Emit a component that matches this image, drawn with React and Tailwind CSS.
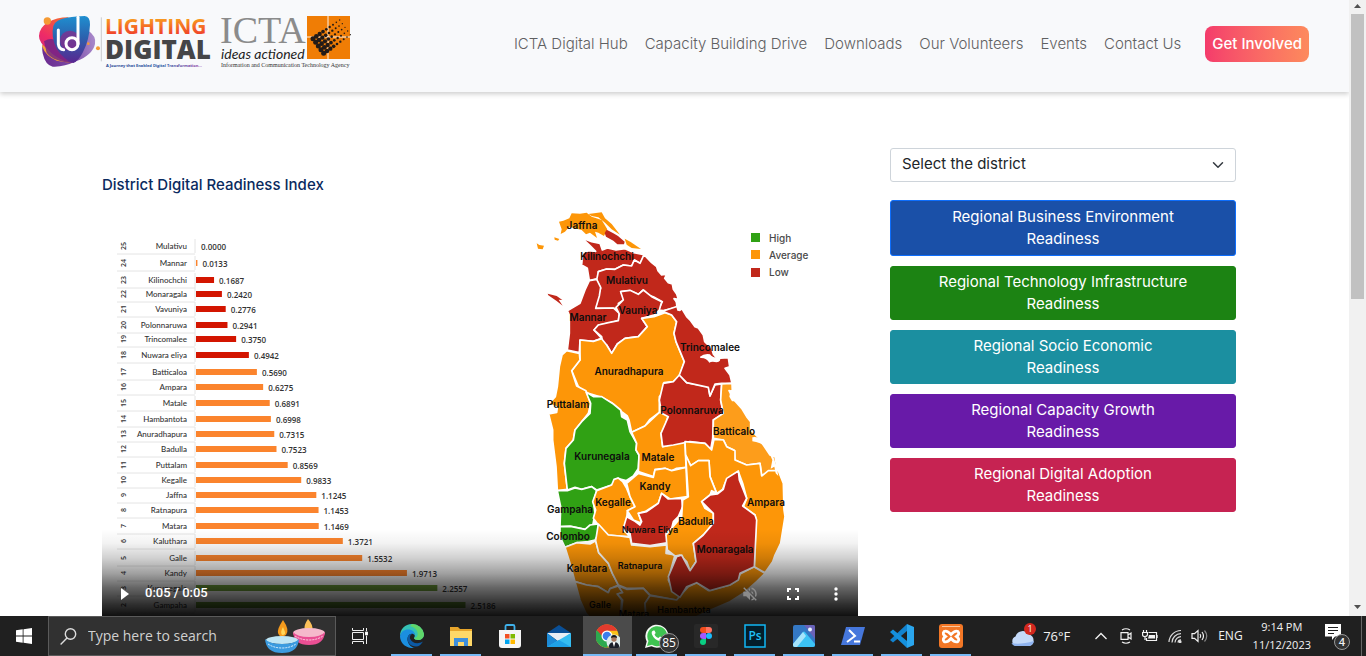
import React from "react";

const NAV = ["ICTA Digital Hub", "Capacity Building Drive", "Downloads", "Our Volunteers", "Events", "Contact Us"];

const INDEX = [
  [25, "Mulativu", "0.0000", 246],
  [24, "Mannar", "0.0133", 263],
  [23, "Kilinochchi", "0.1687", 280],
  [22, "Monaragala", "0.2420", 294],
  [21, "Vavuniya", "0.2776", 309],
  [20, "Polonnaruwa", "0.2941", 325],
  [19, "Trincomalee", "0.3750", 339],
  [18, "Nuwara eliya", "0.4942", 355],
  [17, "Batticaloa", "0.5690", 372],
  [16, "Ampara", "0.6275", 387],
  [15, "Matale", "0.6891", 403],
  [14, "Hambantota", "0.6998", 419],
  [13, "Anuradhapura", "0.7315", 434],
  [12, "Badulla", "0.7523", 449],
  [11, "Puttalam", "0.8569", 465],
  [10, "Kegalle", "0.9833", 480],
  [9, "Jaffna", "1.1245", 495],
  [8, "Ratnapura", "1.1453", 510],
  [7, "Matara", "1.1469", 526],
  [6, "Kaluthara", "1.3721", 541],
  [5, "Galle", "1.5532", 558],
  [4, "Kandy", "1.9713", 573],
  [3, "Kurunegala", "2.2557", 588],
  [2, "Gampaha", "2.5186", 605],
];

const RED = "#c1281b";
const ORANGE = "#fd9608";
const GREEN = "#30a114";

const REGIONS = [
  [ORANGE, "100,62 118,55 125,40 150,41 170,38 185,50 215,60 232,88 222,108 205,98 195,95 201,114 180,98 168,103 155,90 135,85 118,80 105,95 92,102 95,88 87,65"],
  [ORANGE, "175,42 215,37 225,55 245,72 270,104 245,88 225,68 205,52 185,48"],
  [ORANGE, "284,116 302,126 333,147 305,144 290,134"],
  [ORANGE, "20,130 28,135 42,137 38,148 24,146"],
  [ORANGE, "73,112 88,117 84,122 74,119"],
  [RED, "230,89 250,100 264,108 284,125 282,133 262,133 250,122 228,110 224,99"],
  [RED, "156,114 185,125 210,130 217,150 232,144 258,150 285,146 312,158 342,164 338,176 330,190 313,180 305,198 280,195 255,208 230,207 205,215 205,235 178,242 172,205 155,195 158,160 175,152 197,154 180,137"],
  [RED, "205,215 230,207 255,208 280,195 305,198 313,180 330,190 342,164 365,188 380,200 384,212 395,225 411,222 404,235 415,248 427,252 430,268 440,282 445,298 432,296 449,318 440,322 400,332 385,330 397,305 370,290 355,285 340,270 325,283 300,272 272,275 285,297 265,310 268,325 197,325 203,290 212,265 200,240"],
  [RED, "178,242 200,238 212,262 208,288 197,325 250,324 268,340 265,362 235,370 205,375 192,390 215,415 190,424 150,420 148,458 112,450 118,400 118,345 112,332 150,310 165,270"],
  [RED, "53,281 80,288 97,300 86,299 98,317 80,303 55,286"],
  [RED, "272,275 300,271 325,283 340,270 365,290 395,305 388,330 372,345 335,355 352,380 325,410 285,415 262,432 245,460 230,435 218,430 215,410 192,390 205,375 235,368 265,362 268,342 258,322 280,300"],
  [ORANGE, "150,420 190,424 215,416 230,435 245,460 262,432 285,415 325,410 352,380 335,355 372,350 405,338 425,345 440,365 432,400 438,425 463,485 448,530 430,545 402,548 400,575 388,590 388,637 360,658 345,678 305,697 297,660 292,648 275,635 245,608 215,592 168,578 145,560 125,512 150,480"],
  [ORANGE, "110,452 148,460 150,480 125,512 140,558 168,572 182,610 175,640 155,665 135,690 130,720 108,745 103,790 112,868 82,872 78,800 68,720 68,690 56,642 80,637 82,622 56,612 76,590 82,560 88,500 96,465"],
  [ORANGE, "55,553 60,550 59,562"],
  [ORANGE, "42,585 50,586 48,588"],
  [GREEN, "168,576 190,590 215,590 250,612 272,630 275,650 292,660 300,695 320,730 318,750 327,765 325,805 310,828 288,842 262,835 245,855 200,870 185,860 155,868 135,862 112,870 103,790 108,745 130,720 135,690 155,665 180,640 182,610"],
  [GREEN, "82,872 112,872 135,864 155,868 185,860 200,872 190,905 195,940 188,978 165,988 120,978 90,980 92,920"],
  [GREEN, "90,980 125,980 165,988 180,975 205,972 206,1000 195,1020 175,1025 140,1028 105,1042 90,1010"],
  [ORANGE, "200,872 245,855 252,838 265,834 278,845 290,865 300,890 315,920 292,932 290,960 280,990 300,1010 270,1008 235,1005 205,975 190,955 197,930 188,905"],
  [ORANGE, "105,1042 140,1028 180,1032 197,1022 206,1058 235,1090 247,1120 265,1155 240,1166 235,1178 205,1160 170,1155 135,1145 120,1090"],
  [ORANGE, "205,972 235,1005 270,1008 300,1012 305,1035 360,1040 410,1035 408,1060 435,1065 425,1100 415,1140 430,1175 450,1190 440,1200 360,1185 340,1165 290,1165 265,1155 247,1120 235,1090 206,1058 197,1022"],
  [ORANGE, "135,1145 170,1155 205,1160 235,1178 240,1166 265,1158 278,1178 262,1182 275,1200 270,1275 200,1275 168,1240 150,1200"],
  [ORANGE, "265,1158 290,1168 340,1165 360,1187 345,1210 350,1275 270,1275 278,1200 262,1182 278,1178"],
  [ORANGE, "360,1187 440,1200 450,1188 475,1160 500,1148 535,1172 600,1155 625,1138 630,1122 672,1100 705,1120 680,1145 640,1180 600,1205 530,1235 450,1275 350,1275 345,1210"],
  [ORANGE, "305,697 345,678 388,637 415,645 405,680 393,700 398,740 430,732 465,725 468,802 440,805 425,812 405,805 375,808 370,830 325,815 327,765 318,750 320,730"],
  [ORANGE, "325,820 370,832 375,810 405,805 425,812 468,802 472,890 420,897 395,880 385,910 345,935 325,940 335,970 310,960 292,932 315,920 300,890 290,850"],
  [RED, "395,880 415,897 455,895 458,920 445,950 430,965 425,985 408,1000 415,1028 360,1037 305,1030 300,1000 280,985 290,950 312,962 330,975 335,965 325,940 350,935 385,910"],
  [RED, "448,525 470,548 535,560 540,588 555,555 575,552 572,600 580,640 550,660 548,715 542,748 525,730 480,725 430,735 398,740 393,700 415,650 395,640 388,600 400,550 430,545"],
  [RED, "398,334 445,318 455,325 470,350 482,362 495,380 505,384 520,405 524,425 545,445 550,462 560,475 595,473 599,500 585,505 600,525 606,550 575,550 555,552 540,588 535,562 470,548 448,525 463,485 438,425 432,400 440,365 425,345"],
  ["#fd9d1b", "575,552 606,550 607,574 597,572 612,600 635,625 650,650 662,665 662,690 688,715 700,735 720,765 735,770 745,825 725,820 695,825 690,790 650,795 615,780 612,750 590,740 580,720 550,715 550,660 580,640 572,600"],
  [ORANGE, "465,725 525,730 545,750 552,718 580,720 590,740 615,752 615,780 650,795 690,790 695,828 715,812 745,812 760,850 762,930 765,950 752,1030 735,1065 728,1085 705,1118 673,1100 678,960 675,945 640,920 650,895 638,850 625,815 600,830 585,850 578,868 560,880 540,830 537,782 505,782 482,797 467,765"],
  [ORANGE, "467,765 482,797 505,782 537,782 540,830 560,880 545,872 540,885 515,905 525,925 550,940 550,970 520,1005 490,1030 498,1085 480,1112 470,1085 450,1065 435,1068 412,1050 408,1005 425,985 455,950 458,900 475,890"],
  [RED, "590,835 625,813 628,840 640,870 650,895 638,918 675,945 680,960 673,1100 630,1120 625,1140 600,1155 540,1172 500,1148 470,1160 450,1192 425,1175 415,1130 440,1070 455,1065 480,1112 498,1085 490,1030 520,1005 550,970 550,940 515,905 540,885 562,882 580,868 585,850"],
];

const LABELS = [
  ["Jaffna", 581, 228], ["Kilinochchi", 606, 259], ["Mulativu", 626, 283], ["Vauniya", 637, 313],
  ["Mannar", 587, 320], ["Trincomalee", 709, 350], ["Anuradhapura", 628, 374], ["Puttalam", 567, 407],
  ["Polonnaruwa", 691, 413], ["Batticalo", 733, 434], ["Kurunegala", 601, 459], ["Matale", 657, 460],
  ["Kandy", 654, 489], ["Kegalle", 612, 505], ["Gampaha", 569, 512], ["Ampara", 765, 505],
  ["Nuwara Eliya", 649, 532, 9], ["Badulla", 695, 524], ["Colombo", 567, 539], ["Monaragala", 724, 552],
  ["Ratnapura", 639, 568, 9], ["Kalutara", 586, 571], ["Galle", 599, 607, 9], ["Matara", 633, 616, 9],
  ["Hambantota", 683, 612, 9],
];

const BUTTONS = [
  ["Regional Business Environment", "border-[#0d6efd] bg-[#1a50a8] py-[5px]"],
  ["Regional Technology Infrastructure", "border-[#1c8313] bg-[#1c8313] py-1"],
  ["Regional Socio Economic", "border-[#1b8fa0] bg-[#1b8fa0] py-1"],
  ["Regional Capacity Growth", "border-[#681aa8] bg-[#681aa8] py-1"],
  ["Regional Digital Adoption", "border-[#c62352] bg-[#c62352] py-1"],
];

function LightingLogo() {
  return (
    <svg viewBox="38 14 174 56" className="h-14 w-[174px] overflow-visible" role="img" aria-label="Lighting Digital">
      <defs>
        <linearGradient id="word" x1="0" y1="0" x2="0" y2="1">
          <stop offset="0.2" stopColor="#f9a11f" /><stop offset="0.8" stopColor="#f0412a" />
        </linearGradient>
        <linearGradient id="shield" x1="0.5" y1="0" x2="0.5" y2="1">
          <stop offset="0" stopColor="#1f8fd0" /><stop offset="0.45" stopColor="#2b62ae" /><stop offset="1" stopColor="#5a2690" />
        </linearGradient>
        <linearGradient id="petal" x1="0.6" y1="0" x2="0.2" y2="1">
          <stop offset="0" stopColor="#f4603a" /><stop offset="0.5" stopColor="#ee2a68" /><stop offset="1" stopColor="#c22a7e" />
        </linearGradient>
        <linearGradient id="tail" x1="0" y1="0" x2="1" y2="0">
          <stop offset="0" stopColor="#1f3f8f" /><stop offset="0.6" stopColor="#2a55a0" /><stop offset="1" stopColor="#8a3aa0" />
        </linearGradient>
        <linearGradient id="under" x1="0" y1="0.4" x2="1" y2="0.3">
          <stop offset="0" stopColor="#6c2c91" /><stop offset="0.5" stopColor="#7a4aa6" /><stop offset="1" stopColor="#a98acb" />
        </linearGradient>
      </defs>
      <g transform="scale(0.33333)">
        <path d="M262 90 Q290 108 285 132 Q278 165 228 184 Q190 202 158 200 Q136 196 128 160 Q124 138 132 124 Z" fill="url(#under)" />
        <path d="M136 120 Q150 165 215 190 L170 182 Q136 168 126 138 Z" fill="#f3a13b" />
        <path d="M117 108 Q118 82 142 68 Q170 52 205 52 L200 185 Q160 170 146 150 Q116 128 117 108 Z" fill="url(#petal)" />
        <path d="M132 124 Q165 105 180 140 Q196 178 220 189 Q160 185 140 158 Z" fill="#6a2388" opacity="0.8" />
        <path d="M160 78 Q166 58 200 53 Q232 48 254 48 Q271 50 270 74 Q268 120 248 158 Q236 182 220 189 Q190 178 170 146 Q152 110 160 78 Z" fill="url(#shield)" />
        <circle cx="210" cy="122" r="30" fill="#8a2a8a" opacity="0.7" />
        <circle cx="142" cy="63" r="11" fill="#f59a34" />
        <circle cx="294" cy="145" r="6" fill="#f59a34" />
        <circle cx="265" cy="131" r="4" fill="#f59a34" />
        <g fill="none" stroke="#fff" strokeWidth="9" strokeLinecap="round">
          <path d="M175 90 V132 Q177 149 191 149" />
          <circle cx="216" cy="131" r="18" />
          <path d="M234 52 V132" />
        </g>
        <path d="M304 52 V184" stroke="#b5b5b8" strokeWidth="2" />
      </g>
      <text x="105" y="34" fontFamily="Open Sans" fontWeight="700" fontSize="21" fill="url(#word)">LIGHTING</text>
      <text x="105" y="59" fontFamily="Open Sans" fontWeight="800" fontSize="26" fill="#454547">DIGITAL</text>
      <text x="106" y="67" fontFamily="Open Sans" fontWeight="700" fontSize="4" fill="url(#tail)">A Journey that Enabled Digital Transformation...</text>
    </svg>
  );
}

const DOT_RADII = [7.5, 7, 6.5, 5.5, 4, 3.5, 3, 2.5, 2];

function IctaLogo() {
  return (
    <svg viewBox="220 14 132 56" className="h-14 w-[132px] overflow-visible" role="img" aria-label="ICTA">
      <text x="220" y="43" fontFamily="Liberation Serif" fontSize="38" fill="#8b8b8b">ICTA</text>
      <text x="221" y="59" fontFamily="Lato" fontStyle="italic" fontSize="14" fill="#1e1e1e">ideas actioned</text>
      <text x="221" y="67" fontFamily="Liberation Serif" fontSize="6" fill="#333">Information and Communication Technology Agency</text>
      <rect x="307" y="16" width="43" height="43" fill="#f07d05" />
      <path d="M328 16 V59 M307 37 H350" stroke="#fdf3e8" />
      <g transform="scale(0.33333)" fill="#221b18">
        {DOT_RADII.map((r, i) =>
          [0, 1, 2, 3, 4].map((j) => <circle key={i + "-" + j} cx={939 + i * 10 + j * 8} cy={116 - i * 7 + j * 11} r={r} />)
        )}
      </g>
    </svg>
  );
}

function VideoFrame() {
  return (
    <svg viewBox="102 200 756 425" className="block w-full" role="img" aria-label="District readiness chart and map">
      <g fontFamily="Open Sans" fontSize="8">
        {INDEX.map(([rank, name, value, y], i) => {
          const width = Number(value) * 107;
          const color = i === 1 || (i > 7 && i < 22) ? "#fb842d" : i < 8 ? "#d31500" : "#6fa03a";
          return (
            <g key={rank}>
              <path d={`M117 ${y + 8} H195 M195 ${y - 7} V${y + 7}`} stroke="#e4e4e4" fill="none" />
              <text transform={`translate(126 ${y}) rotate(-90)`} textAnchor="middle" fill="#333" fontWeight="600" fontSize="7">{rank}</text>
              <text x="187" y={y + 3} textAnchor="end" fill="#333" fontFamily="Lato" fontWeight="500">{name}</text>
              {width > 0 && <rect x="196" y={y - 3} width={width} height="6" fill={color} />}
              <text x={201 + width} y={y + 4} fill="#333" fontWeight="600">{value}</text>
            </g>
          );
        })}
      </g>
      <g transform="translate(530 200) scale(0.33333)" stroke="#fff" strokeWidth="4" strokeLinejoin="round">
        {REGIONS.map(([fill, points], i) => (
          <polygon key={i} fill={fill} points={points} strokeWidth={i < 6 || i === 9 ? 0 : 5} />
        ))}
        <g fill="#fff" stroke="none">
          <path d="M510 470 Q522 460 540 463 Q545 474 570 474 Q574 484 560 487 Q545 483 538 488 Q530 473 511 474 Z" />
          <path d="M436 300 L448 304 L452 324 L460 326 L450 334 L442 332 L438 318 Z" />
          <path d="M667 712 Q685 708 700 724 Q722 740 730 770 L740 800 L745 828 L737 820 L733 800 L722 806 L727 780 Q712 742 690 730 Q678 726 667 724 Z" />
          <path d="M601 572 L607 580 L615 604 L606 604 L598 590 Z" />
        </g>
      </g>
      <g transform="translate(1 1)" fontFamily="Inter" fontWeight="600" textAnchor="middle" fill="#0d0d0d">
        {LABELS.map(([name, x, y, size]) => (
          <text key={name} x={x} y={y} fontSize={size || 10}>{name}</text>
        ))}
      </g>
      <g fontFamily="Inter" fontSize="10" fontWeight="500" fill="#4a4a4a">
        <rect x="751" y="233" width="9" height="9" fill={GREEN} /><text x="769" y="242">High</text>
        <rect x="751" y="250" width="9" height="9" fill={ORANGE} /><text x="769" y="259">Average</text>
        <rect x="751" y="268" width="9" height="9" fill={RED} /><text x="769" y="276">Low</text>
      </g>
    </svg>
  );
}

function Controls() {
  return (
    <div className="absolute inset-x-0 bottom-0 flex h-24 items-center bg-[linear-gradient(to_bottom,transparent_0%,rgba(0,0,0,0.05)_15%,rgba(0,0,0,0.18)_30%,rgba(0,0,0,0.37)_46%,rgba(0,0,0,0.6)_61%,rgba(0,0,0,0.82)_79%,rgba(0,0,0,0.94)_91%)] pt-[34px] pr-[10px] pl-[11px]">
      <button aria-label="Play" className="flex size-6 items-center justify-center">
        <svg viewBox="0 0 10 12" className="h-3 w-[10px]" fill="#fff"><path d="M1 0 L9 6 L1 12Z" /></svg>
      </button>
      <span className="ml-2 pb-[2px] font-[Roboto] text-[13px] leading-4 font-medium text-white">0:05 / 0:05</span>
      <div className="flex-1" />
      <button aria-label="Unmute" className="mr-[19px] flex size-6 items-center justify-center">
        <svg viewBox="0 0 24 24" className="size-[18px]" fill="#8b8b8b"><path d="M16.5 12A4.5 4.5 0 0 0 14 7.97v2.21l2.45 2.45c.03-.2.05-.41.05-.63zm2.5 0c0 .94-.2 1.82-.54 2.64l1.51 1.51A8.8 8.8 0 0 0 21 12c0-4.28-2.99-7.86-7-8.77v2.06c2.89.86 5 3.54 5 6.71zM4.27 3 3 4.27 7.73 9H3v6h4l5 5v-6.73l4.25 4.25c-.67.52-1.42.93-2.25 1.18v2.06a9 9 0 0 0 3.69-1.81L19.73 21 21 19.73 4.27 3zM12 4 9.91 6.09 12 8.18V4z" /></svg>
      </button>
      <button aria-label="Full screen" className="mr-[19px] flex size-6 items-center justify-center">
        <svg viewBox="0 0 12 12" className="size-3" fill="none" stroke="#fff" strokeWidth="2"><path d="M1 4V1H4 M8 1H11V4 M11 8V11H8 M4 11H1V8" /></svg>
      </button>
      <button aria-label="More options" className="flex size-6 items-center justify-center">
        <svg viewBox="0 0 4 14" className="h-[14px] w-1" fill="#fff"><circle cx="2" cy="2" r="1.7" /><circle cx="2" cy="7" r="1.7" /><circle cx="2" cy="12" r="1.7" /></svg>
      </button>
    </div>
  );
}

const APPS = [
  ["Edge", (
    <g>
      <path d="M12 0a12 12 0 0 1 12 10c0 4-3 6-6 6-2 0-4-.7-4-2 0-.8.8-1 .8-2.500-.3-3-3-4.500-6-4.500C4 7 .5 10 0 12 0 5 5 0 12 0Z" fill="#35c1b5" />
      <path d="M12 0a12 12 0 0 1 12 10c0 4-3 6-6 6-2 0-4-.7-4-2 5 0 6-9-4-12Z" fill="#5fd66a" />
      <path d="M0 12C1 7 5 5 9 5.500c4 .5 6 3 6 6-2-3-6-2-7 1-2 5 2 11 7 11.500C6 25 0 19 0 12Z" fill="#1b8fe0" />
      <path d="M8 12.500c-2 6 3 10 8 10 3 0 5-2 7-5-5 3-11 2-13-3-.5-2 .5-4 2-4.500-2-.4-3.500 1-4 2.500Z" fill="#0c59a4" />
    </g>), "on"],
  ["File Explorer", (
    <g>
      <path d="M1 3h8l2 2h12v17H1Z" fill="#e7a52b" /><path d="M1 7h22v15H1Z" fill="#ffd868" />
      <path d="M5 22v-8h14v8h-4v-4H9v4Z" fill="#3f8fdb" />
    </g>), "on"],
  ["Microsoft Store", (
    <g>
      <path d="M7.500 7V2.500q0-1.500 1.500-1.500h6q1.500 0 1.500 1.500V7" fill="none" stroke="#3fb1ea" strokeWidth="1.800" />
      <path d="M1 6h22v15q0 3-3 3H4q-3 0-3-3Z" fill="#f5f5f5" />
      <path d="M7 10h4.500v4.500H7Z" fill="#f25022" /><path d="M12.500 10H17v4.500h-4.500Z" fill="#7fba00" />
      <path d="M7 15.500h4.500V20H7Z" fill="#00a4ef" /><path d="M12.500 15.500H17V20h-4.500Z" fill="#ffb900" />
    </g>), ""],
  ["Mail", (
    <g>
      <path d="M0 9 12 1l12 8v4H0Z" fill="#0a4f96" /><path d="M0 9h24L12 18Z" fill="#e9eef4" />
      <path d="M0 9 12 18 0 23Z" fill="#1c8ad6" /><path d="M24 9 0 23h24Z" fill="#35bdf2" /><path d="M0 23 12 16l12 7Z" fill="#1fa2e8" />
    </g>), ""],
  ["Chrome", (
    <g>
      <circle cx="11" cy="12" r="11.500" fill="#fbc116" />
      <path d="M11 12 1 6.200A11.500 11.500 0 0 1 21 6.500H11Z" fill="#e33b2e" />
      <path d="M11 12 1 6.200A11.500 11.500 0 0 0 11 23.500l5-8.500Z" fill="#2da94f" />
      <path d="M1 6.200A11.500 11.500 0 0 1 21 6.500H11L6 12Z" fill="#e33b2e" />
      <circle cx="11" cy="12" r="5.500" fill="#fff" /><circle cx="11" cy="12" r="4.300" fill="#3b7ded" />
      <circle cx="18" cy="18" r="7.500" fill="#dcebea" />
      <path d="M12.500 23q1-5 5.500-5t5.500 5a7.500 7.500 0 0 1-11 0Z" fill="#1b2029" /><path d="m16.500 18 1.500 5 1.500-5Z" fill="#fff" />
      <circle cx="18" cy="15" r="2.700" fill="#a9795f" /><path d="M15 14q0-3 3-3t3 3q-3-1.500-6 0Z" fill="#151515" />
    </g>), "active"],
  ["WhatsApp", (
    <g>
      <path d="M0 24 1.700 17.500A11.500 11.500 0 1 1 6.500 22.300Z" fill="#f4f8f4" />
      <path d="M2 22 3.500 17A10 10 0 1 1 7 20.700Z" fill="#3fc351" />
      <path d="M8.500 6.500c-1.500.3-2.300 2-1.500 4 1.500 3.500 4.500 6 7.500 6.500 2 .2 3.500-1 3.500-3l-3-1.500-1.500 1.600c-1.800-.6-3.200-2-4-3.700l1.200-1.400-1.200-2.500Z" fill="#fff" />
    </g>), "on"],
  ["Figma", (
    <g>
      <rect width="24" height="24" rx="2" fill="#282828" />
      <path d="M12 3H9a3 3 0 0 0 0 6h3Z" fill="#f24e1e" /><path d="M12 3h3a3 3 0 0 1 0 6h-3Z" fill="#ff7262" />
      <path d="M12 9H9a3 3 0 0 0 0 6h3Z" fill="#a259ff" /><circle cx="15" cy="12" r="3" fill="#1abcfe" />
      <path d="M12 15H9a3 3 0 1 0 3 3Z" fill="#0acf83" />
    </g>), "on"],
  ["Photoshop", (
    <g>
      <rect x="2" y="1" width="20" height="22" fill="#031e2b" stroke="#10b7f5" strokeWidth="1.500" />
      <text x="12" y="16" textAnchor="middle" fontFamily="Open Sans" fontWeight="600" fontSize="12" fill="#1fc0f8">Ps</text>
    </g>), "on"],
  ["Photos", (
    <g>
      <rect x="1" y="1" width="22" height="22" rx="2" fill="#3478c4" /><path d="M12 1h9q2 0 2 2v12Z" fill="#6a62b8" />
      <path d="M1 20 11 8q1-1 2 0l10 12v1q0 2-2 2H3q-2 0-2-2Z" fill="#3cc3f5" /><path d="M1 20 11 8l3 4-9 11H3q-2 0-2-2Z" fill="#a6e4fb" />
      <circle cx="18" cy="5.500" r="2" fill="#e9f4ff" />
    </g>), "on"],
  ["PowerShell", (
    <g>
      <path d="M5 3h19l-5 18H0Z" fill="#4677dc" />
      <path d="m8 6 6 6-8 6 M13 17.500h6" fill="none" stroke="#fff" strokeWidth="2" />
    </g>), "on"],
  ["Visual Studio Code", (
    <g>
      <path d="M17 0 24 3v18l-7 3Z" fill="#2aa6ee" /><path d="M17 0v7L3 18.500 0 16Z" fill="#1283cf" />
      <path d="M17 24v-7L3 5.500 0 8Z" fill="#1590dd" />
    </g>), "on"],
  ["XAMPP", (
    <g>
      <rect x="0" y="0" width="24" height="24" rx="3" fill="#f37726" /><path d="M3 2.500h18" stroke="#fbc79f" />
      <path d="M5 7.500Q8 6 12 10.500 16 6 19 7.500 21 10 17.500 12.500 21 15 19 17.500 16 19 12 14.500 8 19 5 17.500 3 15 6.500 12.500 3 10 5 7.500Z" fill="none" stroke="#fff" strokeWidth="2.800" />
    </g>), "on"],
];

function Diyas() {
  return (
    <svg viewBox="265 618 62 36" className="h-9 w-[62px] self-center">
      <path d="M308 619q-5 7-3 11 3 4 7 0 2-4-4-11Z" fill="#fbc05a" />
      <ellipse cx="309" cy="633" rx="16" ry="5" fill="#f5b9cc" />
      <path d="M293 632q1 13 16 13t16-13q-4 5-16 5t-16-5Z" fill="#ea4f94" />
      <path d="M295 636q6 4 14 4t14-4" fill="none" stroke="#ffd7e6" strokeDasharray="2 1" />
      <path d="M283 620q-6 9-5 13 2 6 8 2 4-5-3-15Z" fill="#f59a1d" /><path d="M283 627q-3 5-1 8 4 0 3-3Z" fill="#ffd65a" />
      <ellipse cx="282" cy="640" rx="16" ry="4" fill="#bfe6f5" />
      <path d="M265 639q1 14 17 14t17-14q-4 5-17 5t-17-5Z" fill="#3b9be0" />
      <path d="M268 644q6 4 14 4t14-4" fill="none" stroke="#dff3ff" strokeDasharray="2 1" />
    </svg>
  );
}

function Taskbar() {
  return (
    <footer className="flex h-10 shrink-0 bg-[#202020] font-['Open_Sans',sans-serif] text-[#f2f2f2]">
      <button aria-label="Start" className="flex w-12 items-center justify-center">
        <svg viewBox="0 0 16 16" className="size-4" fill="#fff"><path d="M0 2.300 6.700 1.300V7.600H0ZM7.500 1.200 16 0V7.600H7.500ZM0 8.400H6.700V14.700L0 13.700ZM7.500 8.400H16V16L7.500 14.800Z" /></svg>
      </button>
      <label className="flex w-[288px] items-center border border-[#5a5a5a] bg-[#313131] pr-2 pl-[11px]">
        <svg viewBox="0 0 17 17" className="size-[17px] shrink-0" fill="none" stroke="#ddd" strokeWidth="1.400"><circle cx="10.500" cy="6" r="5.200" /><path d="M7 10 .6 16.400" /></svg>
        <input aria-label="Search" placeholder="Type here to search" className="ml-[11px] min-w-0 flex-1 bg-transparent text-sm placeholder:text-[#d0d0d0]" />
        <Diyas />
      </label>
      <button aria-label="Task view" className="mr-[3px] flex w-12 items-center justify-center">
        <svg viewBox="0 0 16 16" className="size-4" fill="none" stroke="#eee"><path d="M.5 0V2.500H11.500V0 M.5 4.500H11.500V11.500H.5Z M.5 16V13.500H11.500V16 M14.500 0V3 M14.500 8V16" /><path d="M13.500 4h2v3h-2Z" fill="#fff" /></svg>
      </button>
      {APPS.map(([name, icon, state]) => (
        <button key={name} aria-label={name} className={"relative flex w-[49px] items-center justify-center " + (state === "active" ? "bg-[#4b4b4b]" : "")}>
          <svg viewBox="0 0 24 24" className="size-6">{icon}</svg>
          {name === "WhatsApp" && (
            <span className="absolute right-[2px] bottom-[3px] flex size-5 items-center justify-center rounded-full border border-[#999] bg-[#333] text-xs leading-3 text-white">85</span>
          )}
          {state && <span className={"absolute bottom-0 h-[2px] bg-[#76b9f5] " + (state === "active" ? "inset-x-0" : "inset-x-1")} />}
        </button>
      ))}
      <div className="flex-1" />
      <div className="flex items-center pr-1">
        <div className="relative mr-2 flex">
          <svg viewBox="0 0 24 22" className="h-[22px] w-6"><path d="M5 21a5 5 0 0 1-.5-9.500A7.500 7.500 0 0 1 18 9.500a6 6 0 0 1 .5 11.500Z" fill="#c4daf9" /><path d="M5 21a5 5 0 0 1-4.500-3q8 2 22.500-2a6 6 0 0 1-4.500 5Z" fill="#8fb3ee" /></svg>
          <span className="absolute -top-[2px] -right-[1px] flex size-3 items-center justify-center rounded-full bg-[#d3281e] text-[9px] leading-3 text-white">1</span>
        </div>
        <span className="w-[52px] text-[13px] leading-4">76°F</span>
        <svg viewBox="0 0 12 8" className="mr-[13px] h-2 w-3" fill="none" stroke="#f2f2f2" strokeWidth="1.300"><path d="M.5 7 6 1.500 11.500 7" /></svg>
        <svg viewBox="0 0 12 16" className="mr-[10px] h-4 w-3" fill="none" stroke="#f2f2f2" strokeWidth="1.200"><path d="M2 2Q6-.5 10 2 M2 14Q6 16.500 10 14 M1 4.600H8V11.400H1Z M8 7 11 5V11L8 9" /></svg>
        <svg viewBox="0 0 16 12" className="mr-[10px] h-3 w-4" fill="none" stroke="#f2f2f2" strokeWidth="1.200"><path d="M6.500 2.500H14.500V10.500H4.500V8 M16 5V8 M1.500 0V2 M4.500 0V2 M.6 2.500H5.400V5Q5 6.500 3 6.500 .6 6.500 .6 5Z M3 6.500V10" /><path d="M7 5H13V8.500H6Z" fill="#f2f2f2" stroke="none" /></svg>
        <svg viewBox="0 0 14 14" className="mr-[9px] size-[14px]" fill="none" stroke="#ddd" strokeWidth="1.200"><path d="M1 13A12 12 0 0 1 13 1.500 M4 13.500A9 9 0 0 1 13 4.600 M7 13.500A6 6 0 0 1 13 7.700 M10 13.500A3 3 0 0 1 13 10.800" /><circle cx="12" cy="12.700" r="1" fill="#fff" /></svg>
        <svg viewBox="0 0 17 14" className="mr-[10px] h-[14px] w-[17px]" fill="none" stroke="#f2f2f2" strokeWidth="1.200"><path d="M1 4.600H3.500L7 1.500V12.500L3.500 9.400H1Z M9 5Q10.500 7 9 9 M11 3Q14 7 11 11" /><path d="M13.500 1.500Q18 7 13.500 12.500" stroke="#888" /></svg>
        <span className="mr-[10px] text-xs leading-4">ENG</span>
        <div className="mr-[14px] text-center text-[11px] leading-[18px]"><div>9:14 PM</div><div>11/12/2023</div></div>
        <div className="relative mr-[12px] size-6">
          <svg viewBox="0 0 16 16" className="size-4" fill="#fff"><path d="M0 0H16V12.500H10L7 16V12.500H0Z" /><path d="M3 3.500H13 M3 6.500H13 M3 9.500H9" stroke="#202020" strokeWidth="1.200" /></svg>
          <span className="absolute -right-[1px] -bottom-[2px] flex size-4 items-center justify-center rounded-full border border-[#999] bg-[#333] text-[11px] leading-3 font-semibold">4</span>
        </div>
        <div className="h-10 w-px bg-[#666]" />
      </div>
    </footer>
  );
}

export default function App() {
  return (
    <div className="flex h-screen flex-col overflow-hidden bg-white font-[Inter,sans-serif]">
      <div className="flex min-h-0 flex-1">
        <div className="min-w-0 flex-1 overflow-hidden">
          <header className="flex h-[92px] items-center bg-[#f8f9fb] pr-10 pb-1 pl-[38px] shadow-[0_2px_5px_rgba(0,0,0,0.2)]">
            <a href="#" className="flex items-center gap-2 pb-1"><LightingLogo /><IctaLogo /></a>
            <nav className="ml-auto flex items-center gap-[17px] text-[15px] leading-6 font-light whitespace-nowrap text-[#5f6062]">
              {NAV.map((item) => <a key={item} href="#">{item}</a>)}
            </nav>
            <button className="ml-6 h-9 rounded-lg bg-linear-to-r from-[#f43b6b] to-[#fd8a5c] px-[7px] text-[15px] leading-6 font-medium whitespace-nowrap text-white">Get Involved</button>
          </header>
          <main className="flex items-start gap-8 pt-14 pr-[113px] pl-[102px]">
            <section className="min-w-0 flex-1 pt-[26px]">
              <h1 className="mb-1 text-[15px] leading-[22px] font-medium text-[#0a2a5e]">District Digital Readiness Index</h1>
              <div className="relative"><VideoFrame /><Controls /></div>
            </section>
            <aside className="w-[346px] shrink-0">
              <div className="relative mb-[18px]">
                <select aria-label="Select the district" className="block h-[34px] w-full appearance-none rounded-[3px] border border-[#ced4da] bg-white px-[11px] pb-[2px] text-[15px] text-[#212529]">
                  <option>Select the district</option>
                </select>
                <svg viewBox="0 0 16 16" className="pointer-events-none absolute top-[11px] right-3 size-3" fill="none" stroke="#343a40" strokeWidth="2" strokeLinecap="round" strokeLinejoin="round"><path d="m2 5 6 6 6-6" /></svg>
              </div>
              <div className="flex flex-col gap-[10px]">
                {BUTTONS.map(([label, style]) => (
                  <button key={label} className={"rounded-[3px] border px-3 text-[15px] leading-[22px] text-white " + style}>{label}<br />Readiness</button>
                ))}
              </div>
            </aside>
          </main>
        </div>
        <div className="flex w-[17px] shrink-0 flex-col items-center bg-[#f1f1f1]">
          <svg viewBox="0 0 17 14" className="h-[14px] w-[17px]" fill="#505050"><path d="M5 8 8.500 4 12 8Z" /></svg>
          <div className="h-[285px] w-[13px] bg-[#c1c1c1]" />
          <svg viewBox="0 0 17 17" className="mt-auto size-[17px]" fill="#505050"><path d="M5 6 8.500 10 12 6Z" /></svg>
        </div>
      </div>
      <Taskbar />
    </div>
  );
}
